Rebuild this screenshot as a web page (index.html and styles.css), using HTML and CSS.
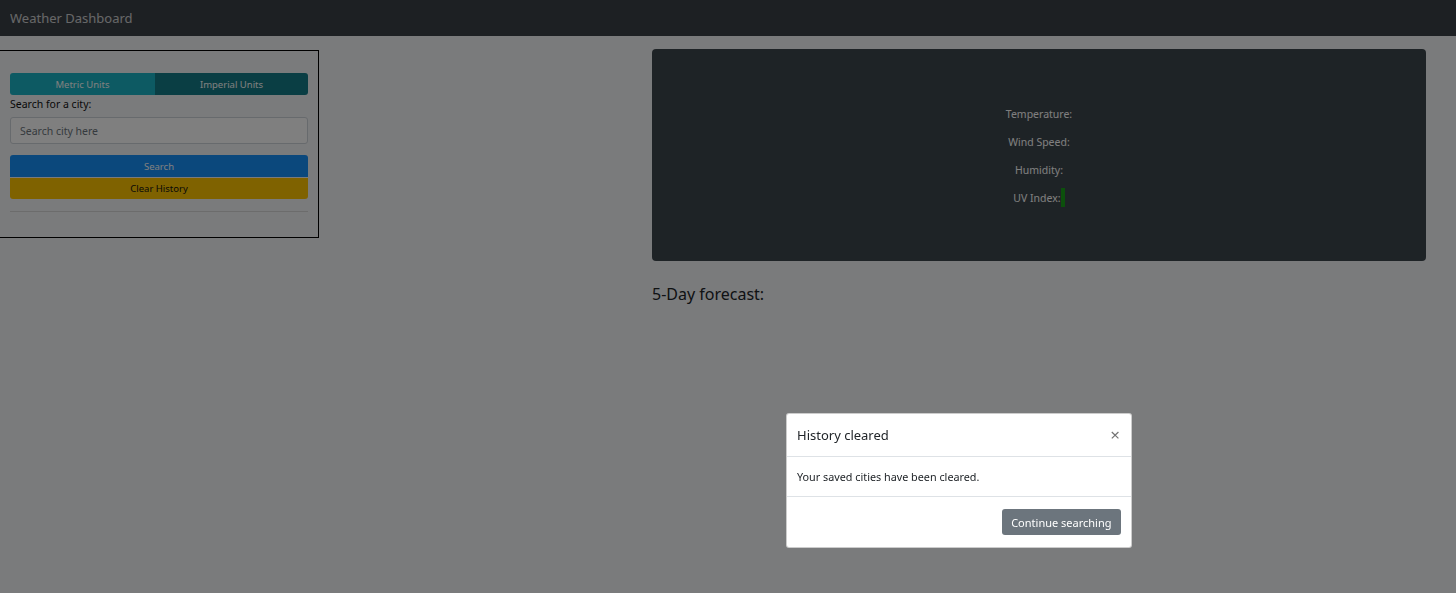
FILE: index.html
```html
<!DOCTYPE html>
<html lang="en">
<head>
<meta charset="utf-8">
<title>Weather Dashboard</title>
<link rel="stylesheet" href="styles.css">
</head>
<body>
<nav class="navbar"><span class="brand">Weather Dashboard</span></nav>
<main class="main">
  <section class="search-card">
    <div class="units">
      <button class="unit metric">Metric Units</button>
      <button class="unit imperial">Imperial Units</button>
    </div>
    <label class="label" for="city">Search for a city:</label>
    <input class="city-input" id="city" type="text" placeholder="Search city here">
    <button class="btn-search">Search</button>
    <button class="btn-clear">Clear History</button>
    <hr class="divider">
  </section>
  <section class="results">
    <div class="current">
      <p class="stat">Temperature:</p>
      <p class="stat">Wind Speed:</p>
      <p class="stat">Humidity:</p>
      <p class="stat">UV Index:<span class="uv"></span></p>
    </div>
    <h3 class="forecast-title">5-Day forecast:</h3>
  </section>
</main>
<div class="backdrop"></div>
<div class="modal">
  <div class="modal-header">
    <span class="modal-title">History cleared</span>
    <span class="close">&times;</span>
  </div>
  <div class="modal-body">Your saved cities have been cleared.</div>
  <div class="modal-footer">
    <button class="btn-continue">Continue searching</button>
  </div>
</div>
</body>
</html>
```
FILE: styles.css
```css
* { box-sizing: border-box; }
html, body { margin: 0; height: 100%; }
body {
  background: #f5f6f8;
  font-family: "Noto Sans", "Open Sans", sans-serif;
  color: #212529;
  overflow: hidden;
}
.navbar {
  height: 36px;
  background: #3b4046;
  display: flex;
  align-items: center;
  padding-left: 10px;
}
.brand { color: #fff; font-size: 13px; opacity: .75; }
.main {
  display: flex;
  align-items: flex-start;
  padding-top: 13px;
}
.search-card {
  width: 320px;
  margin-left: -1px;
  margin-top: 1px;
  border: 1px solid #000;
  padding: 22px 10px 25px 10px;
  display: flex;
  flex-direction: column;
}
.units { display: flex; height: 22px; }
.unit {
  border: 0;
  margin: 0;
  color: #fff;
  font: 9.5px "Noto Sans", sans-serif;
  padding: 0;
}
.metric { width: 145px; background: #1ab5c6; border-radius: 3px 0 0 3px; }
.imperial { flex: 1; background: #147c88; border-radius: 0 3px 3px 0; }
.label { font-size: 10.5px; line-height: 17px; margin-top: 1px; color: #111; }
.city-input {
  margin-top: 4px;
  height: 27px;
  border: 1px solid #ced4da;
  border-radius: 3px;
  background: #fff;
  padding: 0 9px;
  font: 10.5px "Noto Sans", sans-serif;
}
.city-input::placeholder { color: #6c757d; }
.btn-search, .btn-clear {
  border: 0;
  margin: 0;
  height: 21px;
  font: 9.5px "Noto Sans", sans-serif;
  padding: 0;
}
.btn-search { margin-top: 11px; height: 22px; background: #1690f8; color: #fff; border-radius: 3px 3px 0 0; }
.btn-clear { margin-top: 1px; background: #ffc400; color: #111; border-radius: 0 0 3px 3px; }
.divider { width: 100%; margin: 12px 0 0; border: 0; border-top: 1px solid #d8d8d8; }
.results {
  width: 774px;
  margin-left: auto;
  margin-right: 30px;
}
.current {
  background: #3d464c;
  border-radius: 4px;
  height: 212px;
  padding-top: 51px;
  text-align: center;
}
.stat {
  margin: 0;
  height: 28px;
  line-height: 28px;
  font-size: 10.5px;
  color: #fff;
}
.uv {
  display: inline-block;
  width: 4px;
  height: 19px;
  background: #18a018;
  vertical-align: -5px;
}
.forecast-title {
  margin: 23px 0 0;
  font-size: 16px;
  font-weight: 400;
  line-height: 20px;
  color: #212529;
}
.backdrop {
  position: fixed;
  inset: 0;
  background: rgba(0, 0, 0, .5);
}
.modal {
  position: absolute;
  left: 786px;
  top: 413px;
  width: 346px;
  background: #fff;
  border: 1px solid rgba(0,0,0,.2);
  border-radius: 3px;
}
.modal-header {
  display: flex;
  justify-content: space-between;
  align-items: center;
  height: 43px;
  padding: 0 11px 1px 10px;
  border-bottom: 1px solid #dee2e6;
}
.modal-title { font-size: 13px; color: #212529; }
.close { font-size: 17px; color: #000; opacity: .55; line-height: 1; }
.modal-body {
  height: 40px;
  padding: 0 10px 1px;
  display: flex;
  align-items: center;
  font-size: 10.8px;
  border-bottom: 1px solid #dee2e6;
}
.modal-footer {
  height: 50px;
  display: flex;
  justify-content: flex-end;
  align-items: center;
  padding: 0 10px;
}
.btn-continue {
  height: 26px;
  padding: 0 9.5px;
  border: 0;
  border-radius: 3px;
  background: #6c757d;
  color: #fff;
  font: 11px "Noto Sans", sans-serif;
}
```
